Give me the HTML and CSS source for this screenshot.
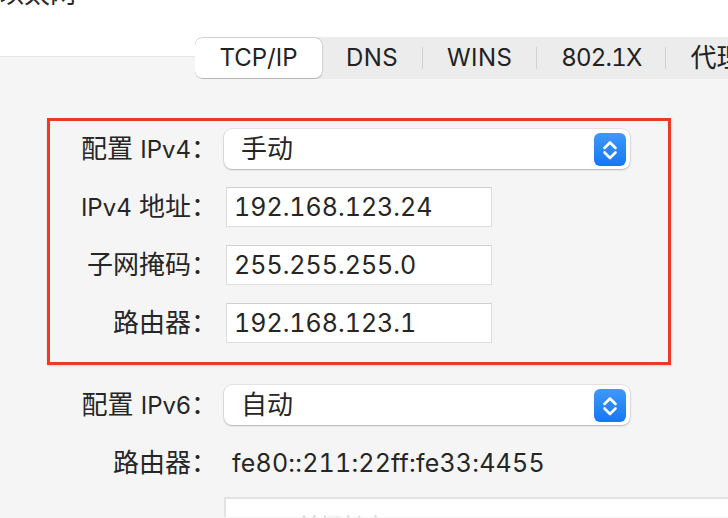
FILE: index.html
```html
<!DOCTYPE html>
<html lang="zh-CN">
<head>
<meta charset="utf-8">
<title>TCP/IP</title>
<link rel="stylesheet" href="styles.css">
</head>
<body>
<header class="head">
  <div class="title">以太网</div>
</header>
<main class="panel">
  <nav class="tabs">
    <div class="tab tab-on">TCP/IP</div>
    <div class="tab">DNS</div>
    <span class="sep"></span>
    <div class="tab">WINS</div>
    <span class="sep"></span>
    <div class="tab tab-num">802.1X</div>
    <span class="sep"></span>
    <div class="tab tab-cjk">代理</div>
  </nav>

  <section class="box">
    <div class="form">
      <div class="label">配置 <span class="lat">IPv4</span>：</div>
      <div class="popup">
        <span class="popup-text">手动</span>
        <span class="stepper">
          <svg width="32" height="33" viewBox="0 0 32 33"><path d="M10.5 15 L16 9.5 L21.5 15 M10.5 19.5 L16 25 L21.5 19.5" fill="none" stroke="#fff" stroke-width="2.6" stroke-linecap="round" stroke-linejoin="round"/></svg>
        </span>
      </div>
      <div class="label"><span class="lat">IPv4</span> 地址：</div>
      <div class="field">192.168.123.24</div>
      <div class="label">子网掩码：</div>
      <div class="field">255.255.255.0</div>
      <div class="label">路由器：</div>
      <div class="field">192.168.123.1</div>
    </div>
  </section>

  <section class="form form-free">
    <div class="label">配置 <span class="lat">IPv6</span>：</div>
    <div class="popup">
      <span class="popup-text">自动</span>
      <span class="stepper">
        <svg width="32" height="33" viewBox="0 0 32 33"><path d="M10.5 15 L16 9.5 L21.5 15 M10.5 19.5 L16 25 L21.5 19.5" fill="none" stroke="#fff" stroke-width="2.6" stroke-linecap="round" stroke-linejoin="round"/></svg>
      </span>
    </div>
    <div class="label">路由器：</div>
    <div class="value">fe80::211:22ff:fe33:4455</div>
  </section>

  <div class="list"><span class="hint">前缀长度</span></div>
</main>
</body>
</html>
```

FILE: styles.css
```css
* { box-sizing: border-box; }
html, body { margin: 0; padding: 0; }
body {
  width: 728px;
  height: 518px;
  overflow: hidden;
  background: #ffffff;
  font-family: Inter, "Noto Sans CJK SC", sans-serif;
  font-size: 24px;
  color: #262626;
}
.head {
  display: flow-root;
  height: 57px;
  border-bottom: 1px solid #e6e6e6;
  background: #ffffff;
}
.title {
  margin-top: -21px;
  margin-left: -2px;
  line-height: 30px;
  font-size: 26px;
  color: #2a2a2a;
}
.panel {
  background: #f5f5f5;
  height: 461px;
  display: flow-root;
}
.tabs {
  display: flex;
  align-items: center;
  margin-left: 195px;
  margin-top: -20px;
  height: 42px;
  width: 533px;
  overflow: hidden;
  background: #ececec;
  border-radius: 8px 0 0 8px;
  white-space: nowrap;
}
.tab {
  flex-shrink: 0;
  height: 40px;
  line-height: 40px;
  padding: 0 24px;
  color: #222;
  letter-spacing: 0.4px;
}
.tab-num {
  font-feature-settings: "tnum";
  letter-spacing: -0.8px;
}
.tab-cjk { font-size: 26px; letter-spacing: 0; }
.tab-on {
  width: 127px;
  padding: 0;
  text-align: center;
  background: #ffffff;
  border-radius: 7px;
  letter-spacing: 0;
  box-shadow: 0 0 0 0.5px rgba(0,0,0,0.16), 0 0.5px 1.5px rgba(0,0,0,0.2);
}
.sep {
  flex-shrink: 0;
  width: 1px;
  height: 22px;
  background: #d2d2d2;
}
.box {
  margin: 39px 0 0 47px;
  width: 624px;
  height: 247px;
  border: 3px solid #ee3a22;
  box-shadow: 0 1px 2px rgba(0,0,0,0.12);
  padding-top: 8px;
}
.form {
  display: grid;
  grid-template-columns: 167px 1fr;
  column-gap: 7px;
  row-gap: 18px;
  align-items: center;
}
.label {
  height: 40px;
  text-align: right;
  line-height: 40px;
  font-size: 26px;
  white-space: nowrap;
  color: #262626;
}
.lat { font-size: 24px; line-height: 1; }
.popup {
  width: 406px;
  height: 40px;
  background: #ffffff;
  border-radius: 8px;
  box-shadow: 0 0 0 0.5px rgba(0,0,0,0.12), 0 1px 2px rgba(0,0,0,0.22);
  display: flex;
  align-items: center;
  justify-content: space-between;
  padding: 0 4px 0 17px;
}
.popup-text { line-height: 40px; font-size: 26px; }
.stepper {
  width: 32px;
  height: 33px;
  border-radius: 6px;
  background: linear-gradient(#3f98fb, #1478f5);
  display: block;
}
.stepper svg { display: block; }
.field {
  margin-left: 2px;
  width: 266px;
  height: 40px;
  line-height: 38px;
  background: #ffffff;
  border: 1px solid #dcdcdc;
  border-top-color: #d0d0d0;
  padding-left: 7px;
  font-size: 25px;
  font-feature-settings: "tnum";
  letter-spacing: 0;
}
.form-free {
  margin: 20px 0 0 50px;
  width: 618px;
}
.value {
  line-height: 40px;
  padding-left: 8px;
  font-size: 25px;
  font-feature-settings: "tnum";
  letter-spacing: 0.2px;
}
.list {
  margin: 14px 0 0 224px;
  height: 20px;
  overflow: hidden;
  background: #ffffff;
  border: 2px solid #e2e2e2;
  border-right: none;
  border-bottom: none;
  padding: 9px 0 0 72px;
}
.hint {
  color: #c4c4c4;
  font-size: 22px;
}
```
